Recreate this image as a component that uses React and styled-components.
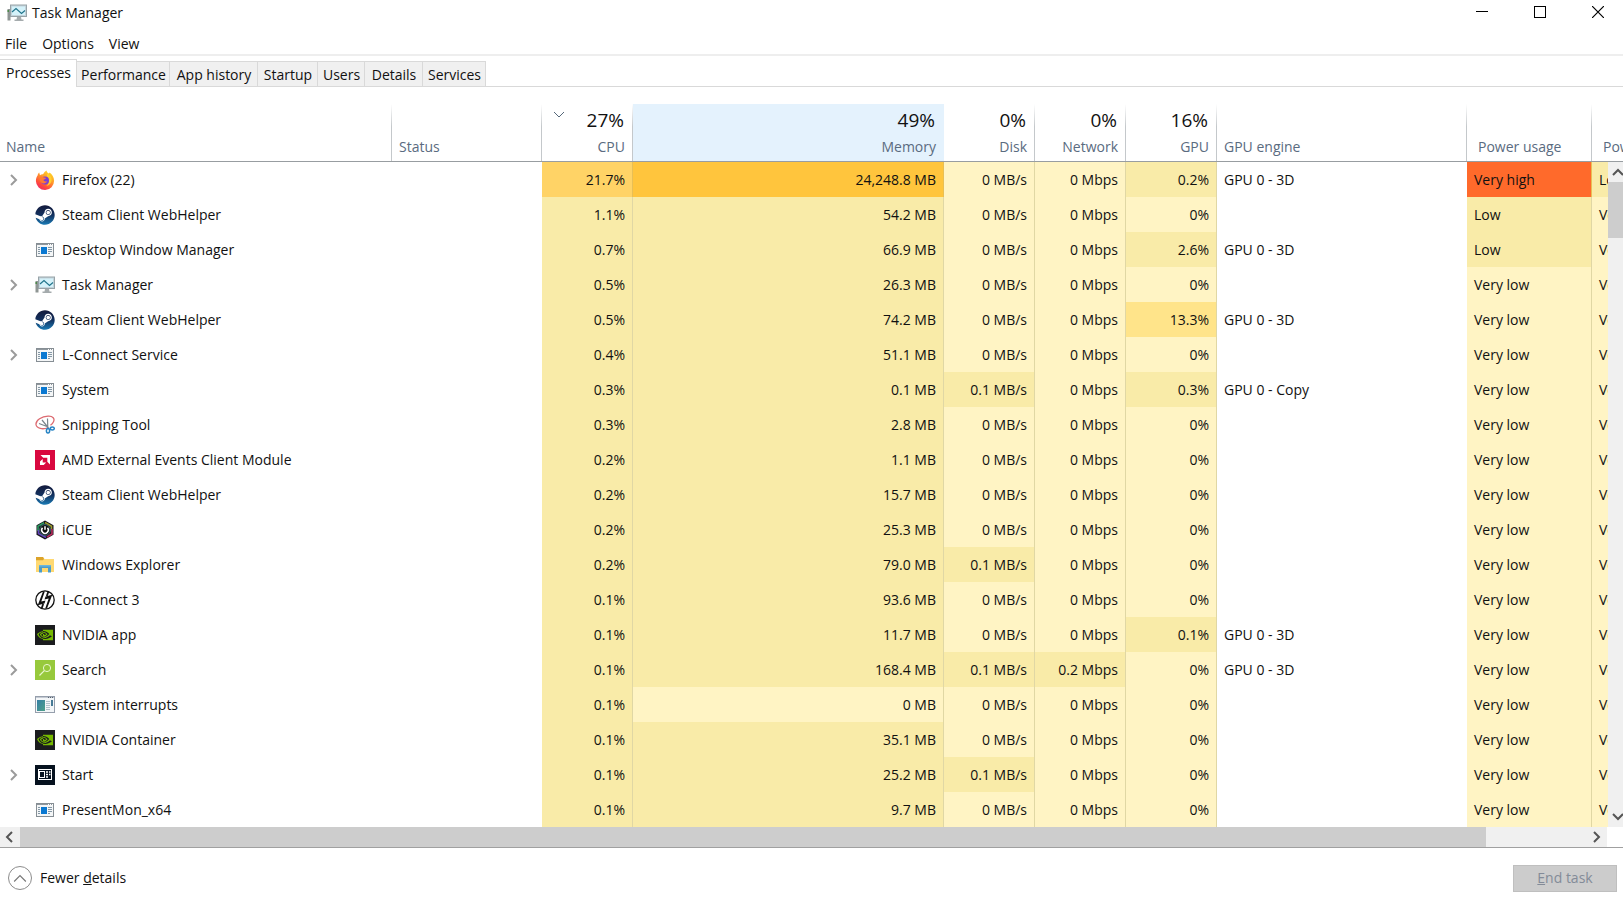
import React, { useState } from "react";
import styled, { createGlobalStyle } from "styled-components";
import { FaSteam } from "react-icons/fa";
import { SiNvidia } from "react-icons/si";

const TABS = [
  { label: "Processes", width: 77 },
  { label: "Performance", width: 93 },
  { label: "App history", width: 88 },
  { label: "Startup", width: 60 },
  { label: "Users", width: 47 },
  { label: "Details", width: 58 },
  { label: "Services", width: 63 },
];

const COLUMNS = [
  { label: "Name" },
  { label: "Status", width: 150 },
  { label: "CPU", width: 91, total: "27%", numeric: true, sorted: true },
  { label: "Memory", width: 311, total: "49%", numeric: true, hot: true },
  { label: "Disk", width: 91, total: "0%", numeric: true },
  { label: "Network", width: 91, total: "0%", numeric: true },
  { label: "GPU", width: 91, total: "16%", numeric: true },
  { label: "GPU engine", width: 250 },
  { label: "Power usage", width: 125, inset: true },
  { label: "Power usage trend", width: 111, inset: true },
];

const HEAT = ["#fff4c4", "#f9eba8", "#ffe48a", "#ffd366", "#ffc53d", "#ff6a2b"];

const PROCESSES = [
  { icon: "firefox", name: "Firefox (22)", group: true, cpu: "21.7%", cpuHeat: 3, mem: "24,248.8 MB", memHeat: 4, gpu: "0.2%", engine: "GPU 0 - 3D", power: "Very high", trend: "Low" },
  { icon: "steam", name: "Steam Client WebHelper", cpu: "1.1%", mem: "54.2 MB", power: "Low" },
  { icon: "app", name: "Desktop Window Manager", cpu: "0.7%", mem: "66.9 MB", gpu: "2.6%", engine: "GPU 0 - 3D", power: "Low" },
  { icon: "taskmgr", name: "Task Manager", group: true, cpu: "0.5%", mem: "26.3 MB" },
  { icon: "steam", name: "Steam Client WebHelper", cpu: "0.5%", mem: "74.2 MB", gpu: "13.3%", gpuHeat: 2, engine: "GPU 0 - 3D" },
  { icon: "app", name: "L-Connect Service", group: true, cpu: "0.4%", mem: "51.1 MB" },
  { icon: "app", name: "System", cpu: "0.3%", mem: "0.1 MB", disk: "0.1 MB/s", gpu: "0.3%", engine: "GPU 0 - Copy" },
  { icon: "snip", name: "Snipping Tool", cpu: "0.3%", mem: "2.8 MB" },
  { icon: "amd", name: "AMD External Events Client Module", cpu: "0.2%", mem: "1.1 MB" },
  { icon: "steam", name: "Steam Client WebHelper", cpu: "0.2%", mem: "15.7 MB" },
  { icon: "icue", name: "iCUE", cpu: "0.2%", mem: "25.3 MB" },
  { icon: "explorer", name: "Windows Explorer", cpu: "0.2%", mem: "79.0 MB", disk: "0.1 MB/s" },
  { icon: "lconnect", name: "L-Connect 3", cpu: "0.1%", mem: "93.6 MB" },
  { icon: "nvidia", name: "NVIDIA app", cpu: "0.1%", mem: "11.7 MB", gpu: "0.1%", engine: "GPU 0 - 3D" },
  { icon: "search", name: "Search", group: true, cpu: "0.1%", mem: "168.4 MB", disk: "0.1 MB/s", net: "0.2 Mbps", engine: "GPU 0 - 3D" },
  { icon: "interrupts", name: "System interrupts", cpu: "0.1%", mem: "0 MB", memHeat: 0 },
  { icon: "nvidia", name: "NVIDIA Container", cpu: "0.1%", mem: "35.1 MB" },
  { icon: "start", name: "Start", group: true, cpu: "0.1%", mem: "25.2 MB", disk: "0.1 MB/s" },
  { icon: "app", name: "PresentMon_x64", cpu: "0.1%", mem: "9.7 MB" },
];

const POWER_HEAT = { "Very low": 0, Low: 1, "Very high": 5 };

const Chevron = ({ dir = "right", size = 12, weight = 2 }) => {
  const points = {
    right: "3,1 8,6 3,11",
    left: "8,1 3,6 8,11",
    up: "1,9 6,4 11,9",
    down: "1,3 6,8 11,3",
  };
  return (
    <svg width={size} height={size} viewBox="0 0 12 12" aria-hidden="true">
      <polyline points={points[dir]} fill="none" stroke="currentColor" strokeWidth={weight} />
    </svg>
  );
};

const FirefoxIcon = () => (
  <Glyph viewBox="0 0 20 20">
    <defs>
      <linearGradient id="fxBody" x1="0.8" y1="0" x2="0.2" y2="1">
        <stop offset="0" stopColor="#ffe226" />
        <stop offset="0.4" stopColor="#ff9a2b" />
        <stop offset="0.75" stopColor="#ff4a3c" />
        <stop offset="1" stopColor="#e8246f" />
      </linearGradient>
    </defs>
    <path d="M4.2 2.6 5 5.2C6 4.3 7 4.2 8 4.3 9 2.6 10 1.2 11.600 .4c0 1.500 1 2.200 2.200 3.100L14.600 2.600c2.500 1.800 4.500 5 4.500 8.100A9.100 9.100 0 0 1 .9 11C.9 8 2 6.500 2.600 5.600 2.800 4.400 3.500 3.300 4.200 2.600Z" fill="url(#fxBody)" />
    <path d="M12 3.500c3.500 1.500 5 4 4.600 7-.4 2.700-2.300 5-5.200 5.400C15 13 14.500 8 12 6.200Z" fill="#ffd02e" />
    <circle cx="10" cy="10.400" r="4" fill="#7b3fd3" />
    <path d="M5 7.200c1.500-.7 3-.4 4 .4 1 .2 1.800.1 2 .5-.3 1.200-2.200 1.200-2.500 2 .1 1.200 1.700 1.800 3.600 1.200-.8 2.200-4 3-6 1.200C4.500 11 4.200 9 5 7.200Z" fill="#ff7a32" />
  </Glyph>
);

const SteamIcon = () => (
  <SteamDisc>
    <svg width="0" height="0" aria-hidden="true">
      <linearGradient id="steamFill" x1="0" y1="0" x2="0" y2="1">
        <stop offset="0" stopColor="#141a3c" />
        <stop offset="0.5" stopColor="#12305e" />
        <stop offset="1" stopColor="#1a7ab4" />
      </linearGradient>
    </svg>
    <FaSteam size={20} fill="url(#steamFill)" />
  </SteamDisc>
);

const AppWindowIcon = () => (
  <Glyph viewBox="0 0 20 20">
    <rect x="1.500" y="3.500" width="17" height="13" fill="#f4f6f7" stroke="#868e94" />
    <path d="M2 4.500h16" stroke="#8f979d" />
    <path d="M13 4.500h1M15 4.500h1M17 4.500h1" stroke="#fff" />
    <rect x="6" y="7" width="6" height="7" fill="#0a78d1" />
    <path d="M3 7.500h2M3 9.500h2M3 11.500h2M3 13.500h2M13 7.500h4M13 9.500h4M13 11.500h4M13 13.500h2" stroke="#8497a5" />
  </Glyph>
);

const TaskManagerIcon = () => (
  <Glyph viewBox="0 0 20 20">
    <rect x="0.500" y="6" width="3" height="11.500" fill="#8f9694" />
    <rect x="0.500" y="7" width="1.500" height="2" fill="#4d8a4a" />
    <rect x="3.500" y="2" width="16" height="11.500" fill="#c3d3da" stroke="#97a3a8" />
    <rect x="5" y="3.500" width="13" height="8.500" fill="#d4f2fa" />
    <path d="M5 9 9 5.500l5.500 5L18 7.500" fill="none" stroke="#22758c" strokeWidth="1.200" />
    <path d="M10 14h4l.5 2.500h-5ZM7.500 16.500h9V18h-9Z" fill="#a5abad" />
  </Glyph>
);

const SnipIcon = () => (
  <Glyph viewBox="0 0 20 20">
    <path d="M13 12.500C8 15 1.500 13.500 1 9.500.5 5 7 1.500 13 1.200c5-.3 7 2.500 5.500 5.500-.6 1.300-1.700 2.500-3 3.500" fill="none" stroke="#dc6a70" strokeWidth="1.300" />
    <path d="m7 5 6.500 8M12.500 3.500 12.800 13M4 8.500l8 3" stroke="#7a858c" strokeWidth="1.200" />
    <ellipse cx="13" cy="15.800" rx="1.600" ry="2.300" fill="none" stroke="#2683c4" strokeWidth="1.500" />
    <ellipse cx="17.300" cy="13.500" rx="2" ry="1.500" fill="none" stroke="#2683c4" strokeWidth="1.500" />
  </Glyph>
);

const AmdIcon = () => (
  <Glyph viewBox="0 0 20 20">
    <rect width="20" height="20" fill="#d9083f" />
    <path d="M5.500 5h9.500v9.500l-2.700-2.700V7.700H8.200Z" fill="#fff" />
    <path d="M7.700 8.900v3.500h3.500l-2.500 2.600H5v-3.500Z" fill="#fff" />
  </Glyph>
);

const IcueIcon = () => (
  <Glyph viewBox="0 0 20 20">
    <path d="M10 .5 18.500 5.300v9.400L10 19.500 1.500 14.700V5.300Z" fill="#17151d" />
    <path d="M3 11V6.200L9 2.800" fill="none" stroke="#2c9a60" strokeWidth="1.600" />
    <path d="m10 2.500 6.500 3.700V9" fill="none" stroke="#9c9a2c" strokeWidth="1.600" />
    <path d="M17 9v5l-5 3" fill="none" stroke="#b82c5c" strokeWidth="1.600" />
    <path d="m11 17.500-7.500-4V10" fill="none" stroke="#6344bd" strokeWidth="1.600" />
    <circle cx="10" cy="10" r="5.400" fill="#111" stroke="#3d6670" />
    <path d="M7.500 7.800a3.300 3.300 0 1 0 5 0M10 6.200v3.600" fill="none" stroke="#fff" strokeWidth="1.500" />
  </Glyph>
);

const ExplorerIcon = () => (
  <Glyph viewBox="0 0 20 20">
    <path d="M1 2h7l1.500 2H19v13H1Z" fill="#ffd972" />
    <path d="M1 2h7l1 2-1 1.200H1Z" fill="#dca32a" />
    <path d="M4 10h12v7.500h-3V13H7v4.500H4Z" fill="#4c9cc9" />
    <path d="M4 10h12v1.500H4Z" fill="#6bb6dc" />
  </Glyph>
);

const LConnectIcon = () => (
  <Glyph viewBox="0 0 20 20">
    <circle cx="10" cy="10" r="9.200" fill="#fff" stroke="#111" strokeWidth="1.300" />
    <path d="M8 1.500h1.800L6.300 11.600l4.200-1-1 2.800-6.800 1.800Z" fill="#111" />
    <path d="M12 18.500h-1.800l3.500-10.100-4.200 1 1-2.800 6.800-1.800Z" fill="#111" />
    <path d="M13.400 1.500 11.800 6M8.200 14 6.600 18.500" stroke="#111" strokeWidth="1.800" />
  </Glyph>
);

const SearchIcon = () => (
  <Glyph viewBox="0 0 20 20">
    <rect width="20" height="20" fill="#97c93c" />
    <circle cx="12" cy="8" r="3.600" fill="none" stroke="#e9f7cf" />
    <path d="M9.300 10.700 4.500 15.500" stroke="#e9f7cf" strokeWidth="1.200" />
  </Glyph>
);

const InterruptsIcon = () => (
  <Glyph viewBox="0 0 20 20">
    <defs>
      <linearGradient id="irqPane" x1="0" y1="0" x2="1" y2="1">
        <stop offset="0" stopColor="#357fa5" />
        <stop offset="1" stopColor="#4fa18a" />
      </linearGradient>
    </defs>
    <rect x="0.500" y="1.500" width="19" height="16" fill="#f3f6f8" stroke="#969fac" />
    <path d="M1 2.500h18" stroke="#c4cad3" />
    <path d="M13 2.500h1M15 2.500h1M17 2.500h1" stroke="#56616e" />
    <rect x="2" y="5" width="8" height="11" fill="url(#irqPane)" />
    <path d="M11 6.500h4M11 8.500h4M11 10.500h4M11 12.500h4M11 14.500h4" stroke="#b3c2cb" />
    <rect x="16" y="5" width="2" height="6" fill="#477a96" />
  </Glyph>
);

const StartIcon = () => (
  <Glyph viewBox="0 0 20 20">
    <rect width="20" height="20" fill="#06121f" />
    <rect x="3.500" y="4.500" width="13" height="10" fill="none" stroke="#fff" />
    <rect x="4.500" y="6.500" width="5" height="6" fill="#06121f" stroke="#fff" />
    <path d="M11 7h2M11 9.500h2M11 12h2M14 7h1.500M14 9.500h1.500" stroke="#fff" strokeWidth="1.500" />
  </Glyph>
);

const NvidiaIcon = () => (
  <NvidiaTile>
    <SiNvidia size={16} />
  </NvidiaTile>
);

const ICONS = {
  firefox: FirefoxIcon,
  steam: SteamIcon,
  app: AppWindowIcon,
  taskmgr: TaskManagerIcon,
  snip: SnipIcon,
  amd: AmdIcon,
  icue: IcueIcon,
  explorer: ExplorerIcon,
  lconnect: LConnectIcon,
  nvidia: NvidiaIcon,
  search: SearchIcon,
  interrupts: InterruptsIcon,
  start: StartIcon,
};

const ProcessRow = ({ process }) => {
  const Icon = ICONS[process.icon];
  const { disk = "0 MB/s", net = "0 Mbps", gpu = "0%" } = process;
  const { power = "Very low", trend = "Very low" } = process;

  return (
    <tr>
      <Cell>
        <NameBox>
          <ExpandSlot>
            {process.group && (
              <ExpandButton aria-label={`Expand ${process.name}`}>
                <Chevron />
              </ExpandButton>
            )}
          </ExpandSlot>
          <Icon />
          {process.name}
        </NameBox>
      </Cell>
      <Cell />
      <HeatCell $heat={process.cpuHeat ?? 1}>{process.cpu}</HeatCell>
      <HeatCell $heat={process.memHeat ?? 1}>{process.mem}</HeatCell>
      <HeatCell $heat={process.disk ? 1 : 0}>{disk}</HeatCell>
      <HeatCell $heat={process.net ? 1 : 0}>{net}</HeatCell>
      <HeatCell $heat={process.gpuHeat ?? (process.gpu ? 1 : 0)}>{gpu}</HeatCell>
      <Cell>{process.engine}</Cell>
      <HeatCell $left $heat={POWER_HEAT[power]}>{power}</HeatCell>
      <HeatCell $left $heat={POWER_HEAT[trend]}>{trend}</HeatCell>
    </tr>
  );
};

const App = () => {
  const [tab, setTab] = useState("Processes");

  return (
    <Window>
      <GlobalStyle />

      <TitleBar>
        <TaskManagerIcon />
        <Title>Task Manager</Title>
        <CaptionButtons>
          <CaptionButton aria-label="Minimize">
            <svg width="12" height="12"><path d="M0 5.500h12" stroke="#000" /></svg>
          </CaptionButton>
          <CaptionButton aria-label="Maximize">
            <svg width="12" height="12"><rect x="0.500" y="0.500" width="11" height="11" fill="none" stroke="#000" /></svg>
          </CaptionButton>
          <CaptionButton aria-label="Close">
            <svg width="12" height="12"><path d="m0 0 12 12M12 0 0 12" stroke="#000" strokeWidth="1.200" /></svg>
          </CaptionButton>
        </CaptionButtons>
      </TitleBar>

      <MenuBar>
        <MenuItem>File</MenuItem>
        <MenuItem>Options</MenuItem>
        <MenuItem>View</MenuItem>
      </MenuBar>

      <TabBar role="tablist">
        {TABS.map(({ label, width }) => (
          <Tab
            key={label}
            role="tab"
            aria-selected={tab === label}
            $active={tab === label}
            $width={width}
            onClick={() => setTab(label)}
          >
            {label}
          </Tab>
        ))}
        <TabFiller />
      </TabBar>

      <Panel>
        <TableClip>
          <Table>
            <colgroup>
              {COLUMNS.map(({ label, width }) => (
                <Col key={label} $width={width} />
              ))}
            </colgroup>
            <thead>
              <tr>
                {COLUMNS.map((col) => (
                  <HeadCell key={col.label} $hot={col.hot} $inset={col.inset} $numeric={col.numeric}>
                    <HeadTop>
                      {col.sorted && (
                        <SortMark>
                          <Chevron dir="down" weight={1} />
                        </SortMark>
                      )}
                      {col.total}
                    </HeadTop>
                    <HeadLabel>{col.label}</HeadLabel>
                  </HeadCell>
                ))}
              </tr>
            </thead>
            <tbody>
              {PROCESSES.map((process, i) => (
                <ProcessRow key={i} process={process} />
              ))}
            </tbody>
          </Table>
        </TableClip>

        <VerticalBar>
          <ArrowButton aria-label="Scroll up"><Chevron dir="up" /></ArrowButton>
          <VerticalThumb />
          <VerticalSpace />
          <ArrowButton aria-label="Scroll down"><Chevron dir="down" /></ArrowButton>
        </VerticalBar>
      </Panel>

      <HorizontalBar>
        <ArrowButton aria-label="Scroll left"><Chevron dir="left" /></ArrowButton>
        <HorizontalThumb />
        <HorizontalSpace />
        <ArrowButton aria-label="Scroll right"><Chevron dir="right" /></ArrowButton>
      </HorizontalBar>

      <Footer>
        <FewerButton>
          <Circle><Chevron dir="up" size={14} weight={1} /></Circle>
          <span>Fewer <u>d</u>etails</span>
        </FewerButton>
        <EndTask disabled><u>E</u>nd task</EndTask>
      </Footer>
    </Window>
  );
};

export default App;

const GlobalStyle = createGlobalStyle`
  * {
    box-sizing: border-box;
  }

  body {
    margin: 0;
    background: #fff;
    color: #111;
    font-family: "Open Sans", "Noto Sans", sans-serif;
    font-size: 14px;
    line-height: 20px;
  }

  button {
    font: inherit;
    color: inherit;
    background: none;
    border: 0;
    padding: 0;
  }

  svg {
    display: block;
    flex: none;
  }
`;

const Window = styled.div`
  height: 100vh;
  display: flex;
  flex-direction: column;
  overflow: hidden;
`;

const Glyph = styled.svg`
  width: 20px;
  height: 20px;
`;

const SteamDisc = styled.span`
  width: 20px;
  height: 20px;
  display: flex;
`;

const NvidiaTile = styled.span`
  width: 20px;
  height: 20px;
  display: flex;
  align-items: center;
  justify-content: center;
  background: #1b1c1e;
  color: #76b900;
`;

const TitleBar = styled.header`
  height: 26px;
  display: flex;
  align-items: center;
  padding-left: 7px;
`;

const Title = styled.span`
  flex: 1;
  padding-left: 5px;
`;

const CaptionButtons = styled.div`
  display: flex;
  align-self: flex-start;
  gap: 12px;
  padding-right: 2px;
`;

const CaptionButton = styled.button`
  width: 46px;
  height: 24px;
  display: flex;
  justify-content: center;
  align-items: center;
`;

const MenuBar = styled.nav`
  height: 30px;
  display: flex;
  align-items: center;
  gap: 15px;
  padding: 8px 5px 0;
  border-bottom: 2px solid #eee;
`;

const MenuItem = styled.button`
  line-height: 20px;
`;

const TabBar = styled.div`
  height: 31px;
  display: flex;
  align-items: flex-end;
`;

const Tab = styled.button`
  width: ${({ $width }) => $width}px;
  height: ${({ $active }) => ($active ? 28 : 26)}px;
  padding: ${({ $active }) => ($active ? "0 0 2px 1px" : "2px 0 0 1px")};
  background: ${({ $active }) => ($active ? "#fff" : "#f0f0f0")};
  border-top: 1px solid #d9d9d9;
  border-right: 1px solid #d9d9d9;
  border-bottom: ${({ $active }) => ($active ? 0 : "1px solid #d9d9d9")};
  white-space: nowrap;
`;

const TabFiller = styled.div`
  flex: 1;
  border-bottom: 1px solid #d9d9d9;
`;

/* The table runs under the scrollbar column so its header keeps the full width */
const Panel = styled.main`
  flex: 1;
  min-height: 0;
  display: grid;
  grid-template-columns: minmax(0, 1fr) 15px;
  grid-template-rows: 58px minmax(0, 1fr);
  padding-top: 17px;
`;

const TableClip = styled.div`
  grid-area: 1 / 1 / 3 / 3;
  overflow: hidden;
`;

const Table = styled.table`
  width: calc(100% + 80px);
  min-width: 1560px;
  table-layout: fixed;
  border-collapse: separate;
  border-spacing: 0;
`;

const Col = styled.col`
  width: ${({ $width }) => ($width ? `${$width}px` : "auto")};
`;

const HeadCell = styled.th`
  height: 58px;
  padding: 0 8px 0 ${({ $inset }) => ($inset ? 11 : 7)}px;
  border-bottom: 1px solid #989da1;
  background: ${({ $hot }) =>
    $hot
      ? "#e4f2fd"
      : "linear-gradient(#fff, #c4c8cb 40%) right / 1px 100% no-repeat"};
  text-align: ${({ $numeric }) => ($numeric ? "right" : "left")};
  font-weight: 400;
  vertical-align: top;
  white-space: nowrap;

  &:first-child {
    padding-left: 6px;
  }
`;

const HeadTop = styled.div`
  height: 33px;
  display: flex;
  justify-content: flex-end;
  padding-right: 1px;
  font-size: 19px;
  line-height: 32px;
`;

const SortMark = styled.span`
  flex: 1;
  padding: 5px 4px 0;
  color: #55687a;
`;

const HeadLabel = styled.div`
  color: #5a6b80;
`;

const Cell = styled.td`
  height: 35px;
  padding: 0 8px 0 7px;
  white-space: nowrap;
  overflow: hidden;

  &:first-child {
    padding-left: 0;
  }
`;

const HeatCell = styled(Cell)`
  background: ${({ $heat }) => HEAT[$heat]};
  border-right: 1px solid ${({ $heat }) => ($heat > 2 ? "#e8bf55" : "#e0d7a4")};
  padding-right: 7px;
  text-align: ${({ $left }) => ($left ? "left" : "right")};
`;

const NameBox = styled.div`
  display: flex;
  align-items: center;

  > :nth-child(2) {
    margin-right: 7px;
  }
`;

const ExpandSlot = styled.span`
  width: 35px;
  padding-left: 8px;
`;

const ExpandButton = styled.button`
  display: block;
  color: #9b9b9b;
`;

const ArrowButton = styled.button`
  flex: none;
  width: 20px;
  height: 20px;
  display: flex;
  align-items: center;
  justify-content: center;
  color: #555;
`;

const VerticalBar = styled.div`
  grid-area: 2 / 2;
  display: flex;
  flex-direction: column;
  overflow: hidden;
  background: #f0f0f0;
`;

const VerticalThumb = styled.div`
  flex: 56;
  background: #cdcdcd;
`;

const VerticalSpace = styled.div`
  flex: 568;
`;

const HorizontalBar = styled.div`
  height: 21px;
  display: flex;
  flex: none;
  padding-right: 16px;
  background: linear-gradient(#f0f0f0, #f0f0f0) content-box;
  border-bottom: 1px solid #a0a0a0;
`;

const HorizontalThumb = styled.div`
  flex: 1466;
  background: #cdcdcd;
`;

const HorizontalSpace = styled.div`
  flex: 101;
`;

const Footer = styled.footer`
  height: 55px;
  flex: none;
  display: flex;
  align-items: center;
  justify-content: space-between;
  padding: 5px 6px 0 8px;
`;

const FewerButton = styled.button`
  display: flex;
  align-items: center;
  gap: 8px;
`;

const Circle = styled.span`
  width: 24px;
  height: 24px;
  display: flex;
  align-items: center;
  justify-content: center;
  border: 1px solid #8c8c8c;
  border-radius: 50%;
  color: #777;
`;

const EndTask = styled.button`
  width: 104px;
  height: 27px;
  background: #ccc;
  border: 1px solid #bfbfbf;
  color: #838b98;
`;
